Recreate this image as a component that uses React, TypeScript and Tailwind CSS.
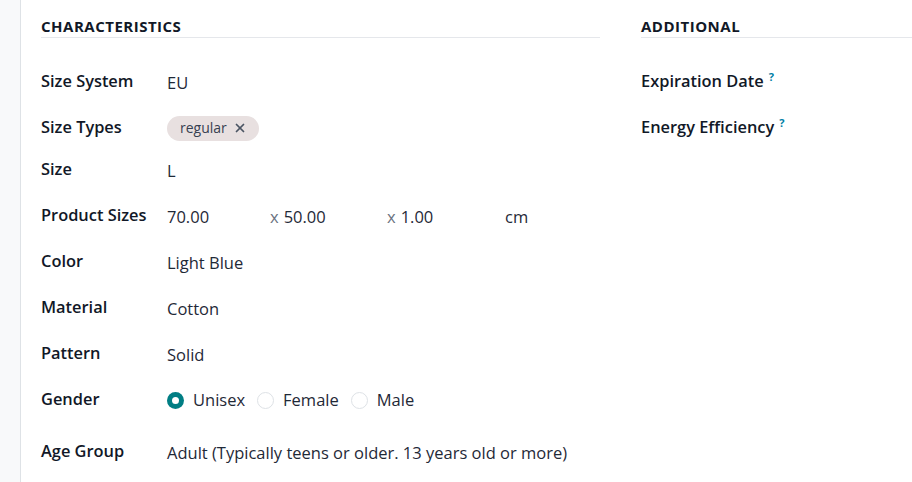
import { X } from "lucide-react";

const font = { fontFamily: "'Open Sans', 'Liberation Sans', sans-serif" };

const Label = ({ children }: { children: React.ReactNode }) => (
  <div className="w-[126px] shrink-0 font-semibold text-[#111827] text-[16.4px] leading-[24px] relative -top-[1px]">
    {children}
  </div>
);

const Help = () => (
  <sup className="ml-[5px] text-[11px] font-bold text-[#0180a5] align-top relative -top-[4px]">?</sup>
);

const Radio = ({ checked, label }: { checked?: boolean; label: string }) => (
  <div className="flex items-center gap-[9px] mr-[12px]">
    {checked ? (
      <span className="w-[17px] h-[17px] rounded-full bg-[#017e84] flex items-center justify-center">
        <span className="w-[7px] h-[7px] rounded-full bg-white" />
      </span>
    ) : (
      <span className="w-[17px] h-[17px] rounded-full border border-[#dee2e6] bg-white" />
    )}
    <span>{label}</span>
  </div>
);

export default function App() {
  return (
    <div className="flex w-[912px] h-[482px] overflow-hidden bg-white" style={font}>
      <div className="w-[21px] shrink-0 bg-[#f8f9fa] border-r border-[#dee2e6]" />
      <div className="flex gap-[41px] pl-[20px]">
        {/* Characteristics */}
        <div className="w-[559px] shrink-0">
          <div className="pt-[18px] pb-[2px] border-b border-[#e5e7eb] font-bold text-[15px] tracking-[0.5px] text-[#111827] leading-[17px]">
            CHARACTERISTICS
          </div>
          <div className="pt-[21px] text-[16.5px] text-[#1f2937] leading-[24px]">
            <div className="flex items-center h-[46px]">
              <Label>Size System</Label>
              <div className="pt-[2px]">EU</div>
            </div>
            <div className="flex items-center h-[46px]">
              <Label>Size Types</Label>
              <div className="flex items-center gap-[6px] h-[25px] pl-[13px] pr-[12px] rounded-full bg-[#e8e0e0] text-[14px] text-[#374151]">
                regular
                <X size={14} strokeWidth={3} className="text-[#4b5563]" />
              </div>
            </div>
            <div className="flex items-center h-[42px] pb-[4px]">
              <Label>Size</Label>
              <div className="pt-[2px]">L</div>
            </div>
            <div className="flex items-center h-[46px]">
              <Label>Product Sizes</Label>
              <div className="flex items-center pt-[2px]">
                <div className="w-[103px]">70.00</div>
                <div className="w-[117px]">
                  <span className="text-[#6b7280] mr-[5px]">x</span>50.00
                </div>
                <div className="w-[118px]">
                  <span className="text-[#6b7280] mr-[5px]">x</span>1.00
                </div>
                <div>cm</div>
              </div>
            </div>
            <div className="flex items-center h-[46px]">
              <Label>Color</Label>
              <div className="pt-[2px]">Light Blue</div>
            </div>
            <div className="flex items-center h-[46px]">
              <Label>Material</Label>
              <div className="pt-[2px]">Cotton</div>
            </div>
            <div className="flex items-center h-[46px]">
              <Label>Pattern</Label>
              <div className="pt-[2px]">Solid</div>
            </div>
            <div className="flex items-center h-[46px]">
              <Label>Gender</Label>
              <div className="flex items-center">
                <Radio checked label="Unisex" />
                <Radio label="Female" />
                <Radio label="Male" />
              </div>
            </div>
            <div className="flex items-center h-[58px]">
              <Label>Age Group</Label>
              <div className="pt-[2px]">Adult (Typically teens or older. 13 years old or more)</div>
            </div>
          </div>
        </div>

        {/* Additional */}
        <div className="w-[559px] shrink-0">
          <div className="pt-[18px] pb-[2px] border-b border-[#e5e7eb] font-bold text-[15px] tracking-[0.5px] text-[#111827] leading-[17px]">
            ADDITIONAL
          </div>
          <div className="pt-[21px] text-[16.4px] text-[#111827] font-semibold leading-[24px]">
            <div className="flex items-center h-[46px] relative -top-[1px]">
              Expiration Date
              <Help />
            </div>
            <div className="flex items-center h-[46px] relative -top-[1px]">
              Energy Efficiency
              <Help />
            </div>
          </div>
        </div>
      </div>
    </div>
  );
}
